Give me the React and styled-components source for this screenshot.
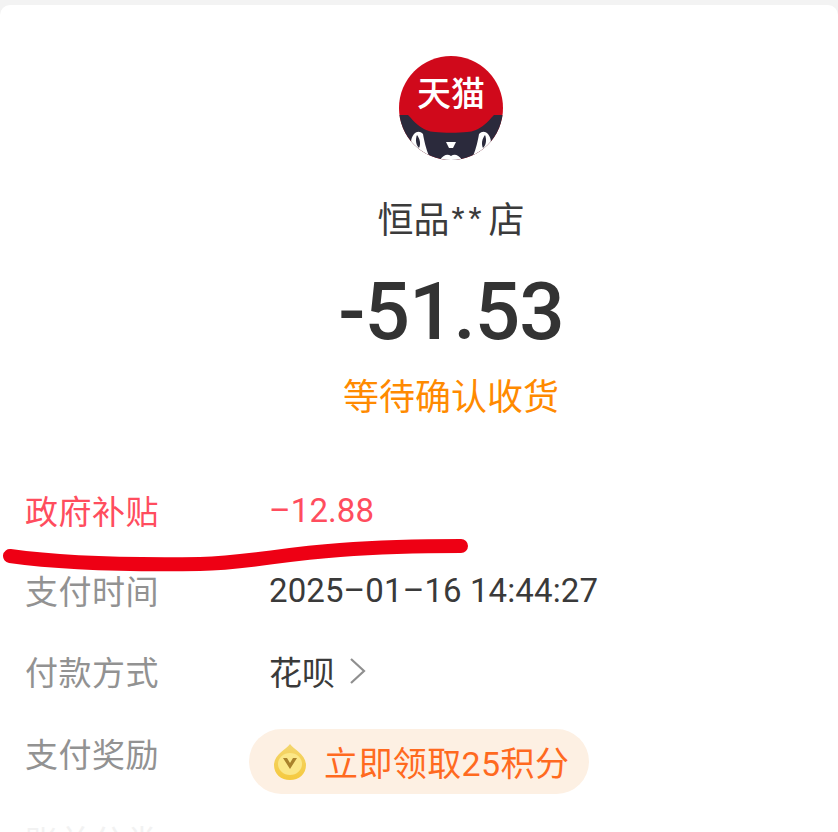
import React from 'react';
import styled, { createGlobalStyle } from 'styled-components';

const GlobalStyle = createGlobalStyle`
  html, body {
    margin: 0;
    padding: 0;
    height: 832px;
    overflow: hidden;
    background: #f3f3f3;
  }
  body {
    font-family: "Roboto", "Noto Sans CJK SC", sans-serif;
  }
`;

const Card = styled.main`
  position: relative;
  height: 827px;
  margin-top: 5px;
  background: #fff;
  border-radius: 10px 10px 0 0;
  overflow: hidden;
`;

const Hero = styled.section`
  display: flex;
  flex-direction: column;
  align-items: center;
  padding: 51px 0 0 64px;
`;

const LogoWrap = styled.svg`
  display: block;
  width: 104px;
  height: 104px;
`;

const ShopName = styled.div`
  margin-top: 34px;
  height: 54px;
  line-height: 54px;
  font-size: 36px;
  color: #3b3b3b;
`;

const Stars = styled.span`
  position: relative;
  top: -5px;
  padding: 0 3px 0 2px;
  font-size: 30px;
  letter-spacing: 4px;
`;

const Amount = styled.div`
  margin-top: 15px;
  height: 98px;
  line-height: 98px;
  font-family: "Roboto", sans-serif;
  font-size: 80px;
  font-weight: 500;
  letter-spacing: -1px;
  color: #333;
`;

const Status = styled.div`
  margin-top: 7px;
  height: 60px;
  line-height: 60px;
  font-size: 36px;
  color: #ff8a00;
`;

const Details = styled.section`
  display: flex;
  flex-direction: column;
  padding: 42px 0 0 25px;
`;

const Row = styled.div`
  display: grid;
  grid-template-columns: 244px auto;
  align-items: center;
  justify-content: start;
  height: ${(p) => p.$h || 80}px;
`;

const Label = styled.span`
  font-size: 33px;
  letter-spacing: 0.5px;
  color: ${(p) => p.$color || '#929292'};
`;

const Value = styled.span`
  display: flex;
  align-items: center;
  gap: 13px;
  font-size: 33px;
  letter-spacing: 0.1px;
  color: ${(p) => p.$color || '#3a3a3a'};
`;

const Pill = styled.span`
  display: inline-flex;
  align-items: center;
  gap: 17px;
  width: 340px;
  height: 65px;
  box-sizing: border-box;
  margin: 17px 0 0 -20px;
  padding-left: 24px;
  border-radius: 33px;
  background: #fdf0e3;
  font-size: 34px;
  letter-spacing: 0.4px;
  color: #ff6a1f;
`;

const Scribble = styled.svg`
  position: absolute;
  left: 0;
  top: 525px;
  width: 480px;
  height: 50px;
`;

const CatEye = () => (
  <>
    <path d="M15 78 C11 83 11 89 16 94 C21 98 26 100 30 100 C27 93 25 84 24 78 C21 75 18 75 15 78 Z" fill="#fff" />
    <path d="M18 79 C16 84 17 89 20 92 C22 88 21 83 18 79 Z" fill="#2b2a3c" />
  </>
);

const TmallLogo = () => (
  <LogoWrap viewBox="0 0 104 104">
    <defs>
      <clipPath id="round">
        <circle cx="52" cy="52" r="52" />
      </clipPath>
    </defs>
    <g clipPath="url(#round)">
      <rect width="104" height="104" fill="#d0091b" />
      <path
        d="M0 59 L9 59 C13 63 15 66 19 69 C24 73 30 76 36 76 C44 77 60 77 68 76 C74 76 80 73 85 69 C89 66 91 63 95 59 L104 59 L104 104 L0 104 Z"
        fill="#2b2a3c"
      />
      <CatEye />
      <g transform="translate(104,0) scale(-1,1)">
        <CatEye />
      </g>
      <path d="M47 86 L57 86 L54 92 L50 92 Z" fill="#fff" />
      <path d="M41 104 C45 98 49 98 52 100 C55 98 59 98 63 104 Z" fill="#fff" />
      <text
        x="52"
        y="50"
        textAnchor="middle"
        fontFamily='"Noto Sans CJK SC", sans-serif'
        fontSize="34"
        fontWeight="500"
        fill="#fff"
      >
        天猫
      </text>
    </g>
  </LogoWrap>
);

const Coin = () => (
  <svg width="34" height="38" viewBox="0 0 34 38">
    <defs>
      <linearGradient id="coin" x1="0" y1="0" x2="0" y2="1">
        <stop offset="0" stopColor="#f3d66e" />
        <stop offset="1" stopColor="#f5c93e" />
      </linearGradient>
    </defs>
    <path
      d="M17 1 C20 6 33 11 33 22 C33 31 26 37 17 37 C8 37 1 31 1 22 C1 11 14 6 17 1 Z"
      fill="url(#coin)"
    />
    <ellipse cx="17" cy="21" rx="12" ry="11" fill="#fbe788" />
    <path d="M10 15 L17 26 L24 15 L20 15 L17 20 L14 15 Z" fill="#a9822c" />
  </svg>
);

const Chevron = () => (
  <svg width="20" height="28" viewBox="0 0 20 28" fill="none">
    <path d="M3 2 L16 14 L3 26" stroke="#8f8f8f" strokeWidth="2.2" />
  </svg>
);

export default function App() {
  return (
    <>
      <GlobalStyle />
      <Card>
        <Hero>
          <TmallLogo />
          <ShopName>恒品<Stars>**</Stars>店</ShopName>
          <Amount>-51.53</Amount>
          <Status>等待确认收货</Status>
        </Hero>
        <Details>
          <Row>
            <Label $color="#ff4d5e">政府补贴</Label>
            <Value $color="#ff4d5e">–12.88</Value>
          </Row>
          <Row>
            <Label>支付时间</Label>
            <Value>2025–01–16 14:44:27</Value>
          </Row>
          <Row $h={82}>
            <Label>付款方式</Label>
            <Value>花呗<Chevron /></Value>
          </Row>
          <Row>
            <Label>支付奖励</Label>
            <Pill><Coin />立即领取25积分</Pill>
          </Row>
          <Row $h={96}>
            <Label $color="#f2f2f2">账单分类</Label>
          </Row>
        </Details>
        <Scribble viewBox="0 0 480 50" fill="none">
          <path
            d="M10 26 C60 33 130 35 200 34 C250 33 280 24 340 20 C380 17 420 16 461 16"
            stroke="#ee0014"
            strokeWidth="14"
            strokeLinecap="round"
          />
        </Scribble>
      </Card>
    </>
  );
}
